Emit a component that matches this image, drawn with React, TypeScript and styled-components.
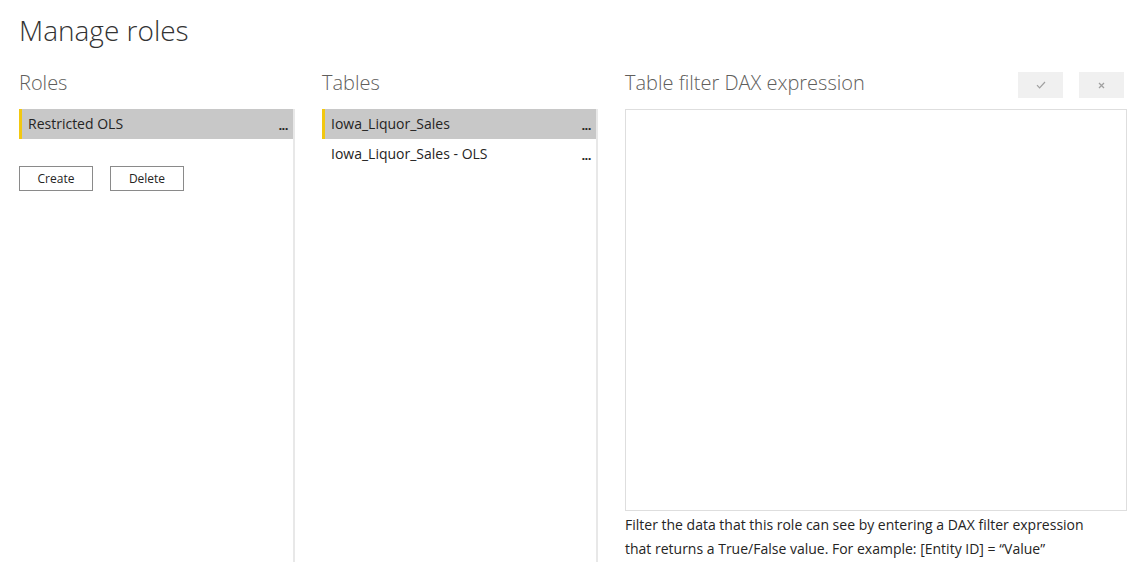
import { createGlobalStyle } from "styled-components";
import styled from "styled-components";

const GlobalStyle = createGlobalStyle`
	html, body {
		margin: 0;
		padding: 0;
		background: #ffffff;
		overflow: hidden;
	}
	body {
		font-family: "Open Sans", "Noto Sans", sans-serif;
		color: #252423;
	}
`;

const Page = styled.div`
	width: 1129px;
	height: 562px;
	box-sizing: border-box;
	padding: 0 2px 0 19px;
	display: flex;
	flex-direction: column;
	overflow: hidden;
`;

const Title = styled.h1`
	font: 300 28px/1 "Open Sans", sans-serif;
	color: #333333;
	margin: 16px 0 0;
	height: 49px;
`;

const Columns = styled.div`
	flex: 1;
	display: grid;
	grid-template-columns: 276px 276px 1fr;
	column-gap: 27px;
	min-height: 0;
`;

const Column = styled.section`
	display: flex;
	flex-direction: column;
	min-height: 0;
`;

const HeaderRow = styled.div`
	height: 44px;
	display: flex;
	align-items: flex-start;
	justify-content: space-between;
`;

const Heading = styled.h2`
	font: 300 20px/1 "Open Sans", sans-serif;
	color: #605e5c;
	margin: 8px 0 0;
`;

const ListPane = styled.div`
	flex: 1;
	border-right: 2px solid #e8e8e8;
	display: flex;
	flex-direction: column;
`;

const Row = styled.div<{ selected?: boolean }>`
	height: 30px;
	box-sizing: border-box;
	display: flex;
	align-items: center;
	justify-content: space-between;
	padding: 0 5px 0 ${({ selected }) => (selected ? 6 : 9)}px;
	background: ${({ selected }) => (selected ? "#c8c8c8" : "transparent")};
	border-left: ${({ selected }) => (selected ? "3px solid #f2c811" : "none")};
	font: 400 14px/1 "Open Sans", sans-serif;
	color: #252423;
`;

const More = styled.span`
	font: 700 13px/1 "Open Sans", sans-serif;
	letter-spacing: -0.5px;
	padding-top: 3px;
`;

const ButtonBar = styled.div`
	display: flex;
	gap: 17px;
	margin-top: 27px;
`;

const Button = styled.button`
	width: 74px;
	height: 25px;
	box-sizing: border-box;
	border: 1px solid #8a8a8a;
	background: #ffffff;
	font: 400 12px/1 "Open Sans", sans-serif;
	color: #252423;
	padding: 0;
`;

const IconBar = styled.div`
	display: flex;
	gap: 16px;
	margin-top: 7px;
	margin-right: 3px;
`;

const IconButton = styled.button`
	width: 45px;
	height: 26px;
	border: none;
	background: #f0f0f0;
	color: #a0a0a0;
	display: flex;
	align-items: center;
	justify-content: center;
	padding: 0;
`;

const ExpressionBox = styled.textarea`
	height: 402px;
	box-sizing: border-box;
	border: 1px solid #dedede;
	resize: none;
	outline: none;
	margin: 0;
	padding: 6px;
	font: 400 14px "Open Sans", sans-serif;
`;

const HelpText = styled.p`
	font: 400 14px/24px "Open Sans", sans-serif;
	color: #252423;
	margin: 2px 0 0;
	width: 478px;
`;

const CheckIcon = () => (
	<svg width="10" height="8" viewBox="0 0 10 8" fill="none">
		<path d="M1 4.2 L3.6 6.8 L9 1" stroke="currentColor" strokeWidth="1.2" />
	</svg>
);

const CrossIcon = () => (
	<svg width="7" height="7" viewBox="0 0 7 7" fill="none">
		<path d="M1 1 L6 6 M6 1 L1 6" stroke="currentColor" strokeWidth="1.3" />
	</svg>
);

const roles = [{ name: "Restricted OLS", selected: true }];
const tables = [
	{ name: "Iowa_Liquor_Sales", selected: true },
	{ name: "Iowa_Liquor_Sales - OLS", selected: false },
];

const App = () => (
	<>
		<GlobalStyle />
		<Page>
			<Title>Manage roles</Title>
			<Columns>
				<Column>
					<HeaderRow>
						<Heading>Roles</Heading>
					</HeaderRow>
					<ListPane>
						{roles.map(r => (
							<Row key={r.name} selected={r.selected}>
								<span>{r.name}</span>
								<More>...</More>
							</Row>
						))}
						<ButtonBar>
							<Button type="button">Create</Button>
							<Button type="button">Delete</Button>
						</ButtonBar>
					</ListPane>
				</Column>
				<Column>
					<HeaderRow>
						<Heading>Tables</Heading>
					</HeaderRow>
					<ListPane>
						{tables.map(t => (
							<Row key={t.name} selected={t.selected}>
								<span>{t.name}</span>
								<More>...</More>
							</Row>
						))}
					</ListPane>
				</Column>
				<Column>
					<HeaderRow>
						<Heading>Table filter DAX expression</Heading>
						<IconBar>
							<IconButton type="button" aria-label="Accept">
								<CheckIcon />
							</IconButton>
							<IconButton type="button" aria-label="Cancel">
								<CrossIcon />
							</IconButton>
						</IconBar>
					</HeaderRow>
					<ExpressionBox />
					<HelpText>
						Filter the data that this role can see by entering a DAX filter expression
						that returns a True/False value. For example: [Entity ID] = “Value”
					</HelpText>
				</Column>
			</Columns>
		</Page>
	</>
);

export default App;
